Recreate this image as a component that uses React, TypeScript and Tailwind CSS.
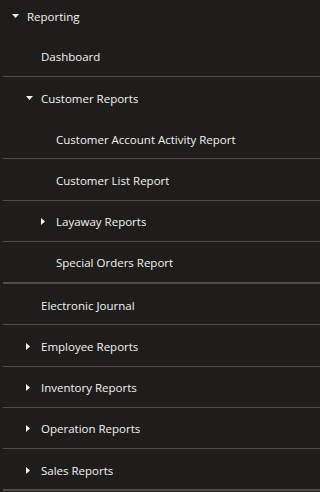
import * as React from 'react'

// ============================================================================
// Types
// ============================================================================

interface NavNode {
  label: string
  children?: NavNode[]
  expanded?: boolean
}

const tree: NavNode = {
  label: 'Reporting',
  expanded: true,
  children: [
    { label: 'Dashboard' },
    {
      label: 'Customer Reports',
      expanded: true,
      children: [
        { label: 'Customer Account Activity Report' },
        { label: 'Customer List Report' },
        { label: 'Layaway Reports', children: [] },
        { label: 'Special Orders Report' },
      ],
    },
    { label: 'Electronic Journal' },
    { label: 'Employee Reports', children: [] },
    { label: 'Inventory Reports', children: [] },
    { label: 'Operation Reports', children: [] },
    { label: 'Sales Reports', children: [] },
  ],
}

// ============================================================================
// Pieces
// ============================================================================

function Caret({ open }: { open: boolean }) {
  return open ? (
    <svg width="7" height="4" viewBox="0 0 7 4" className="fill-[#f2f2f2]">
      <path d="M0 0h7L3.5 4z" />
    </svg>
  ) : (
    <svg width="4" height="7" viewBox="0 0 4 7" className="fill-[#f2f2f2]">
      <path d="M0 0v7l4-3.5z" />
    </svg>
  )
}

const indents = ['pl-[9px]', 'pl-[23px]', 'pl-[38px]']

function Row({ node, level }: { node: NavNode; level: number }) {
  const hasKids = node.children !== undefined
  const open = !!node.expanded

  const header = (
    <div
      className={`flex h-[41.25px] items-center pt-[2px] ${indents[level]} ${
        open ? '' : 'border-b border-[#4e4e4e]'
      }`}
    >
      <span className="flex w-[15px] items-center">{hasKids && <Caret open={open} />}</span>
      <span className="truncate">{node.label}</span>
    </div>
  )

  if (!open) return header

  return (
    <div className="border-b border-[#4e4e4e]">
      {header}
      {node.children!.map((child) => (
        <Row key={child.label} node={child} level={level + 1} />
      ))}
    </div>
  )
}

// ============================================================================
// Component
// ============================================================================

export default function App() {
  return (
    <div
      className="min-h-[492px] w-full overflow-hidden bg-[#1f1d1c] pl-[3px] text-[11.5px] text-[#f2f2f2]"
      style={{ fontFamily: '"Open Sans", "Noto Sans", sans-serif' }}
    >
      <div className="flex h-[35.5px] items-center pb-[3px] pl-[9px]">
        <span className="flex w-[15px] items-center">
          <Caret open />
        </span>
        <span>{tree.label}</span>
      </div>
      <div className="border-b border-[#4e4e4e]">
        {tree.children!.map((child) => (
          <Row key={child.label} node={child} level={1} />
        ))}
      </div>
    </div>
  )
}
